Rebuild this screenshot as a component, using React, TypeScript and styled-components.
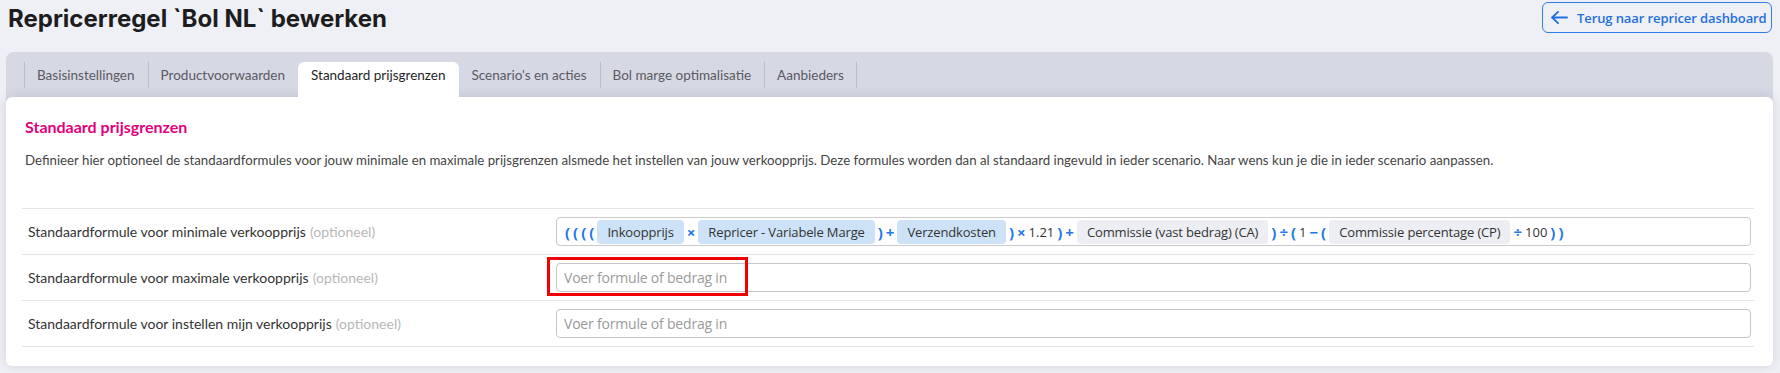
import React from "react";
import styled, { createGlobalStyle } from "styled-components";

const GlobalStyle = createGlobalStyle`
  html, body { margin: 0; padding: 0; }
  body {
    background: #eff0f5;
    font-family: "Open Sans", "Noto Sans", sans-serif;
    color: #333;
  }
  * { box-sizing: border-box; }
`;

const textFont = `"Lato", "Open Sans", sans-serif`;

const Page = styled.div`
  padding: 0 7px 10px 6px;
`;

const Header = styled.header`
  display: flex;
  justify-content: space-between;
  align-items: flex-start;
  height: 52px;
`;

const Title = styled.h1`
  margin: 0;
  padding: 4px 0 0 2px;
  font-family: "Inter", "Liberation Sans", sans-serif;
  font-weight: 700;
  font-size: 24px;
  line-height: 30px;
  color: #1d1d1f;
`;

const BackButton = styled.button`
  margin: 2px 1px 0 0;
  height: 31px;
  width: 230px;
  padding: 0 8px;
  display: flex;
  align-items: center;
  gap: 9px;
  background: transparent;
  border: 1px solid #2f7de6;
  border-radius: 6px;
  color: #1f6fe0;
  font-family: "Open Sans", sans-serif;
  font-weight: 600;
  font-size: 13px;
  letter-spacing: -0.1px;
  white-space: nowrap;
  cursor: pointer;
  svg {
    flex-shrink: 0;
  }
`;

const TabsPanel = styled.section`
  background: #d6d8e4;
  border-radius: 8px;
`;

const TabList = styled.nav`
  display: flex;
  align-items: flex-start;
  height: 45px;
  padding: 10px 0 0 18px;
`;

const Tab = styled.div<{ $active?: boolean; $divider?: boolean; $last?: boolean }>`
  position: relative;
  z-index: 2;
  height: 35px;
  padding: 3px 13px 0;
  font-family: ${textFont};
  font-size: 13.5px;
  line-height: 20px;
  color: ${(p) => (p.$active ? "#1f1f1f" : "#5a5a62")};
  background: ${(p) => (p.$active ? "#fff" : "transparent")};
  border-radius: ${(p) => (p.$active ? "6px 6px 0 0" : "0")};
  white-space: nowrap;
  &::before {
    content: "";
    display: ${(p) => (p.$divider ? "block" : "none")};
    position: absolute;
    left: 0;
    top: 0;
    width: 1px;
    height: 26px;
    background: #b9bccf;
  }
  &::after {
    content: "";
    display: ${(p) => (p.$last ? "block" : "none")};
    position: absolute;
    right: 0;
    top: 0;
    width: 1px;
    height: 26px;
    background: #b9bccf;
  }
`;

const Card = styled.div`
  position: relative;
  z-index: 1;
  background: #fff;
  border-radius: 6px;
  padding: 20px 19px 19px 16px;
  box-shadow: 0 0 12px rgba(40, 44, 70, 0.14);
`;

const Heading = styled.h2`
  margin: 0 0 13px 3px;
  font-family: ${textFont};
  font-size: 16px;
  line-height: 20px;
  font-weight: 700;
  color: #e3007c;
`;

const Description = styled.p`
  margin: 0 0 38px 3px;
  font-family: ${textFont};
  font-size: 13.25px;
  line-height: 20px;
  color: #444;
`;

const Rows = styled.div`
  border-bottom: 1px solid #e4e4e6;
`;

const Row = styled.div`
  display: grid;
  grid-template-columns: 534px 1fr;
  align-items: center;
  border-top: 1px solid #e4e4e6;
  padding: 8px 3px 8px 0;
`;

const Label = styled.div`
  padding-left: 6px;
  font-family: ${textFont};
  font-size: 14px;
  line-height: 20px;
  color: #333;
`;

const Optional = styled.span`
  color: #b8b8b8;
  margin-left: 4px;
`;

const FormulaBox = styled.div`
  display: flex;
  align-items: center;
  gap: 3px;
  min-height: 29px;
  padding: 1px 8px;
  border: 1px solid #c9c9cc;
  border-radius: 4px;
`;

const Pill = styled.span<{ $tone: "blue" | "gray" }>`
  display: inline-flex;
  align-items: center;
  height: 24px;
  padding: 0 10px;
  border-radius: 4px;
  background: ${(p) => (p.$tone === "blue" ? "#cde2f7" : "#eceef3")};
  font-size: 13px;
  letter-spacing: -0.15px;
  color: #333;
  white-space: nowrap;
`;

const Op = styled.span`
  color: #2477ea;
  font-weight: 700;
  font-size: 15px;
  line-height: 24px;
`;

const Num = styled.span`
  color: #333;
  font-size: 13px;
`;

const InputWrap = styled.div`
  position: relative;
`;

const FormulaInput = styled.input`
  display: block;
  width: 100%;
  height: 29px;
  padding: 0 7px;
  border: 1px solid #c6c6c9;
  border-radius: 4px;
  font-family: "Open Sans", sans-serif;
  font-size: 14px;
  letter-spacing: -0.2px;
  color: #333;
  background: #fff;
  &::placeholder {
    color: #9b9b9b;
  }
`;

const Highlight = styled.div`
  position: absolute;
  left: -9px;
  top: -6px;
  width: 201px;
  height: 39px;
  border: 3px solid #f00000;
  pointer-events: none;
`;

const ArrowIcon = () => (
  <svg width="17" height="13" viewBox="0 0 17 13" fill="none" stroke="currentColor" strokeWidth="1.8" strokeLinecap="round" strokeLinejoin="round">
    <path d="M16 6.5H1.2" />
    <path d="M7 0.9L1.2 6.5L7 12.1" />
  </svg>
);

const tabs = [
  "Basisinstellingen",
  "Productvoorwaarden",
  "Standaard prijsgrenzen",
  "Scenario's en acties",
  "Bol marge optimalisatie",
  "Aanbieders",
];
const activeIndex = 2;

export default function App() {
  return (
    <>
      <GlobalStyle />
      <Page>
        <Header>
          <Title>Repricerregel `Bol NL` bewerken</Title>
          <BackButton>
            <ArrowIcon />
            Terug naar repricer dashboard
          </BackButton>
        </Header>
        <TabsPanel>
          <TabList>
            {tabs.map((t, i) => (
              <Tab
                key={t}
                $active={i === activeIndex}
                $divider={i !== activeIndex && i !== activeIndex + 1}
                $last={i === tabs.length - 1}
              >
                {t}
              </Tab>
            ))}
          </TabList>
          <Card>
            <Heading>Standaard prijsgrenzen</Heading>
            <Description>
              Definieer hier optioneel de standaardformules voor jouw minimale en maximale prijsgrenzen alsmede het
              instellen van jouw verkoopprijs. Deze formules worden dan al standaard ingevuld in ieder scenario. Naar wens
              kun je die in ieder scenario aanpassen.
            </Description>
            <Rows>
              <Row>
                <Label>
                  Standaardformule voor minimale verkoopprijs<Optional>(optioneel)</Optional>
                </Label>
                <FormulaBox>
                  <Op>(</Op>
                  <Op>(</Op>
                  <Op>(</Op>
                  <Op>(</Op>
                  <Pill $tone="blue">Inkoopprijs</Pill>
                  <Op>×</Op>
                  <Pill $tone="blue">Repricer - Variabele Marge</Pill>
                  <Op>)</Op>
                  <Op>+</Op>
                  <Pill $tone="blue">Verzendkosten</Pill>
                  <Op>)</Op>
                  <Op>×</Op>
                  <Num>1.21</Num>
                  <Op>)</Op>
                  <Op>+</Op>
                  <Pill $tone="gray">Commissie (vast bedrag) (CA)</Pill>
                  <Op>)</Op>
                  <Op>÷</Op>
                  <Op>(</Op>
                  <Num>1</Num>
                  <Op>−</Op>
                  <Op>(</Op>
                  <Pill $tone="gray">Commissie percentage (CP)</Pill>
                  <Op>÷</Op>
                  <Num>100</Num>
                  <Op>)</Op>
                  <Op>)</Op>
                </FormulaBox>
              </Row>
              <Row>
                <Label>
                  Standaardformule voor maximale verkoopprijs<Optional>(optioneel)</Optional>
                </Label>
                <InputWrap>
                  <FormulaInput placeholder="Voer formule of bedrag in" />
                  <Highlight />
                </InputWrap>
              </Row>
              <Row>
                <Label>
                  Standaardformule voor instellen mijn verkoopprijs<Optional>(optioneel)</Optional>
                </Label>
                <InputWrap>
                  <FormulaInput placeholder="Voer formule of bedrag in" />
                </InputWrap>
              </Row>
            </Rows>
          </Card>
        </TabsPanel>
      </Page>
    </>
  );
}
